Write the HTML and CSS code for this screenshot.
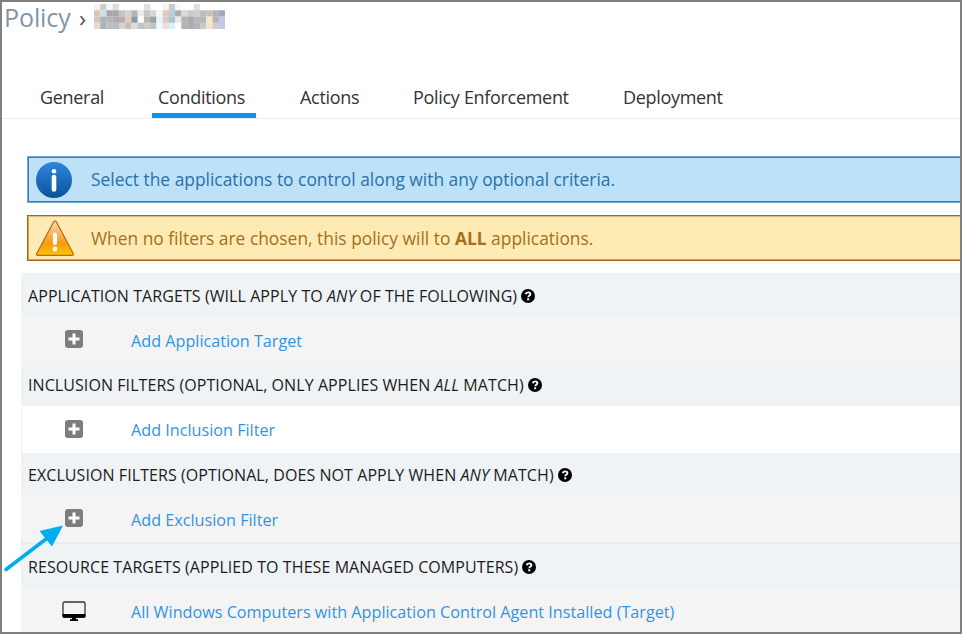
FILE: index.html
```
<!DOCTYPE html>
<html lang="en">
<head>
<meta charset="utf-8">
<title>Policy</title>
<link rel="stylesheet" href="styles.css">
</head>
<body>
<svg class="defs" width="0" height="0" aria-hidden="true">
  <symbol id="plus" viewBox="0 0 18 18"><rect width="18" height="18" rx="3" fill="#7d7d7d"/><path d="M9 3.500v11M3.500 9h11" stroke="#fff" stroke-width="3"/></symbol>
  <symbol id="help" viewBox="0 0 14 14"><circle cx="7" cy="7" r="7" fill="#000"/><path d="M4.700 5.200C5 3.800 6 3.400 7.100 3.400c1.300 0 2.300.7 2.300 1.800C9.400 6.700 7.300 6.500 7.300 8.300" fill="none" stroke="#fff" stroke-width="1.900"/><rect x="6.200" y="9.300" width="2" height="2" fill="#fff"/></symbol>
</svg>
<div class="frame">
  <header class="crumbs">
    <span class="crumb">Policy</span><span class="sep">›</span>
    <svg class="mosaic" id="mosaic" width="131" height="25" viewBox="0 0 21 4" preserveAspectRatio="none"></svg>
  </header>
  <nav class="tabs">
    <a class="tab t1">General</a>
    <a class="tab t2 active">Conditions</a>
    <a class="tab t3">Actions</a>
    <a class="tab t4">Policy Enforcement</a>
    <a class="tab t5">Deployment</a>
  </nav>
  <div class="notice info">
    <svg width="38" height="38" viewBox="0 0 38 38"><defs><linearGradient id="blue" x2="0" y2="1"><stop offset="0" stop-color="#2d86e0"/><stop offset="1" stop-color="#0b539a"/></linearGradient></defs><circle cx="19" cy="19" r="18" fill="url(#blue)"/><circle cx="19" cy="10.300" r="2.300" fill="#fff"/><path d="M19 16v12.500" stroke="#fff" stroke-width="4.600" stroke-linecap="round"/></svg>
    <span>Select the applications to control along with any optional criteria.</span>
  </div>
  <div class="notice warn">
    <svg width="40" height="38" viewBox="0 0 40 38"><defs><linearGradient id="orange" x2="0" y2="1"><stop offset="0" stop-color="#fbd9a5"/><stop offset=".45" stop-color="#f9ad49"/><stop offset=".65" stop-color="#f99a0c"/><stop offset="1" stop-color="#ffc400"/></linearGradient></defs><path d="M20 2.200q1 0 1.600 1.100L38.200 34.500q.8 1.800-1 1.800H2.800q-1.800 0-1-1.800L18.400 3.300Q19 2.200 20 2.200Z" fill="url(#orange)" stroke="#b4691e" stroke-width="1.200"/><path d="M20 15.500v8.500" stroke="#fff" stroke-width="4.200" stroke-linecap="round"/><circle cx="20" cy="30" r="2.400" fill="#fff"/></svg>
    <span>When no filters are chosen, this policy will to <b>ALL</b> applications.</span>
  </div>
  <main class="sections">
    <h2 class="head"><span>APPLICATION TARGETS (WILL APPLY TO <i>ANY</i> OF THE FOLLOWING)</span><svg width="14" height="14"><use href="#help"/></svg></h2>
    <div class="row low"><svg width="18" height="18"><use href="#plus"/></svg><a>Add Application Target</a></div>
    <h2 class="head tight"><span>INCLUSION FILTERS (OPTIONAL, ONLY APPLIES WHEN <i>ALL</i> MATCH)</span><svg width="14" height="14"><use href="#help"/></svg></h2>
    <div class="row white"><svg width="18" height="18"><use href="#plus"/></svg><a>Add Inclusion Filter</a></div>
    <h2 class="head tight short"><span>EXCLUSION FILTERS (OPTIONAL, DOES NOT APPLY WHEN <i>ANY</i> MATCH)</span><svg width="14" height="14"><use href="#help"/></svg></h2>
    <div class="row low"><svg width="18" height="18"><use href="#plus"/></svg><a>Add Exclusion Filter</a></div>
    <h2 class="head ruled"><span>RESOURCE TARGETS (APPLIED TO THESE MANAGED COMPUTERS)</span><svg width="14" height="14"><use href="#help"/></svg></h2>
    <div class="row last"><svg class="screen" width="24" height="20" viewBox="0 0 24 20"><rect x="1" y="1" width="22" height="15" rx="1.500" fill="#f4f4f4" stroke="#333" stroke-width="1.300"/><path d="M.5 13h23v2.500q0 1.200-1.200 1.200H14v1.500h2V20H8v-1.800h2v-1.500H1.700Q.5 16.700.5 15.500Z" fill="#000"/></svg><a>All Windows Computers with Application Control Agent Installed (Target)</a></div>
  </main>
</div>
<svg class="pointer" width="62" height="52" viewBox="0 0 62 52"><path d="M3 46.500 45 14.500" stroke="#00aeef" stroke-width="3.600" stroke-linecap="round"/><path d="M60 2.500 36.500 8 49 23.500Z" fill="#00aeef"/></svg>
<script src="mosaic.js"></script>
</body>
</html>
```
FILE: mosaic.js
```
// Pixelated policy name: one colour per cell, row by row.
const rows = [
  "f8f3f0 cccccc f4f6f9 dddddd - - - - e0e0e0 - - f7f2f0 c8cccc f3f9fb - - e0dfe0 - - - -",
  "dbc5b8 cfdfea a5a5ab a9a8ad c8c6c4 d6d3cf b4b6ba e9ebec c0c8c6 d8d6d4 f2f8fc e4c8bd b0d0dd aaadb0 d9d9d9 c9c9cb cfcfcf c3bcbc c9c1bb b8b3b0 9da6c9",
  "dbc5b8 a4b6c2 b5b5b7 b1afb3 b0aeb2 e5c9b5 8799ab ffffff b8b5b0 98a2a3 e5f3f9 e4c8bd a9c5d2 e8e8ea b5b2b3 a9aaac b9b9bb b9b5b7 f5e6c8 b6b3b8 bfc8ea",
  "e8d8cd a8b4b8 c0bec0 bdbabd d6d4d0 c3bfbf dcdcdc c2c5c6 cccccc bcc3c2 f0f8fb f0dfd8 d8f0f9 fcfcfc b5b2b5 adadaf b5b3b4 c9c8ca f0e5d2 d2cdc9 c3c9e5"
];
const svg = document.getElementById("mosaic");
rows.forEach((line, y) => line.split(" ").forEach((c, x) => {
  if (c === "-") return;
  const r = document.createElementNS("http://www.w3.org/2000/svg", "rect");
  r.setAttribute("x", x);
  r.setAttribute("y", y);
  r.setAttribute("width", 1.02);
  r.setAttribute("height", 1.02);
  r.setAttribute("fill", "#" + c);
  svg.appendChild(r);
}));
```
FILE: styles.css
```
* { box-sizing: border-box; }
body { margin: 0; background: #fff; font-family: "Open Sans", sans-serif; overflow: hidden; }
.defs { position: absolute; }
.frame { width: 962px; height: 634px; border: 2px solid #808080; overflow: hidden; }
.crumbs { height: 70px; display: flex; align-items: flex-start; color: #8295a9; font-size: 25px; line-height: 30px; padding-left: 2px; }
.crumb { width: 75px; letter-spacing: -.1px; }
.sep { width: 15px; color: #555; font-size: 24px; line-height: 31px; }
.mosaic { margin-top: 2px; }
.tabs { display: flex; height: 47px; border-bottom: 1px solid #e5eff3; padding-left: 32px; font-size: 18px; letter-spacing: -.31px; color: #333; }
.tab { line-height: 51px; padding-left: 6px; white-space: nowrap; }
.t1 { width: 118px; }
.t2 { width: 104px; margin-right: 38px; }
.t3 { width: 113px; }
.t4 { width: 210px; }
.active { border-bottom: 5px solid #0b93ea; }
.notice { margin-left: 25px; display: flex; align-items: center; font-size: 17.4px; white-space: nowrap; border: 1px solid; border-right: 0; padding-left: 7px; }
.notice span { margin-left: 18px; }
.info { height: 47px; margin-top: 37px; background: #bde2f8; border-color: #78a9d6; box-shadow: inset 0 1px #3e78b5, inset 0 -1px #3e78b5, inset 1px 0 #3e78b5; color: #2a70aa; }
.info span { padding-bottom: 2px; }
.warn { height: 46px; margin-top: 12px; background: #feebb4; border-color: #a8651a; box-shadow: inset 0 1px #e0bb76, inset 0 -1px #cf9f4a, inset 1px 0 #cf9f4a; color: #a66e20; }
.warn span { margin-left: 16px; }
.sections { margin: 12px 0 0 19px; background: #f4f4f4; }
.head { margin: 0; height: 43px; background: #eff3f6; font-weight: 400; font-size: 16px; letter-spacing: .075px; padding: 3px 0 0 7px; display: flex; align-items: center; color: #1c1c1c; white-space: nowrap; gap: 4px; }
.tight { padding-top: 1px; }
.short { height: 42px; }
.ruled { height: 45px; border-top: 2px solid #e6ecef; }
.row { height: 47px; display: flex; align-items: center; padding: 0 0 1px 44px; font-size: 16.19px; color: #2f94e6; }
.row a { margin-left: 48px; padding-top: 1px; white-space: nowrap; }
.low a { padding-top: 3px; }
.last { padding-bottom: 0; }
.last a { padding-top: 2px; }
.white { background: #fff; border-left: 1px solid #eff3f6; padding-left: 43px; }
.screen { margin: 1px -3px 0; }
.pointer { position: absolute; left: 3px; top: 523px; }
```
